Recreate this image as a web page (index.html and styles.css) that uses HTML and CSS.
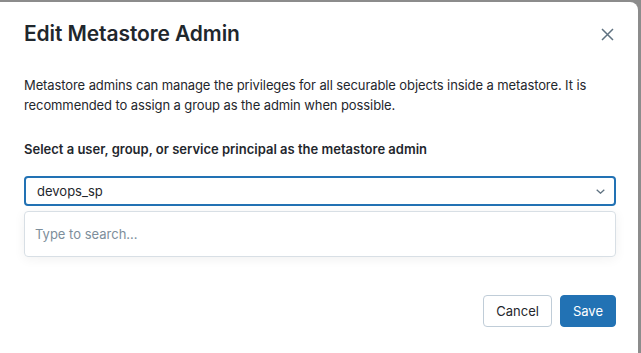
FILE: index.html
```html
<!DOCTYPE html>
<html lang="en">
<head>
  <meta charset="UTF-8" />
  <title>Edit Metastore Admin</title>
  <link rel="stylesheet" href="styles.css">
</head>
<body>
  <div class="modal">
    <div class="modal-header">
      <h2 class="modal-title">Edit Metastore Admin</h2>
      <button class="close" aria-label="Close">
        <svg width="13" height="13" viewBox="0 0 13 13"><path d="M1 1L12 12M12 1L1 12" stroke="#5f7281" stroke-width="1.5" fill="none"/></svg>
      </button>
    </div>

    <div class="modal-body">
      <p class="desc">Metastore admins can manage the privileges for all securable objects inside a metastore. It is recommended to assign a group as the admin when possible.</p>
      <div class="label">Select a user, group, or service principal as the metastore admin</div>

      <div class="select">
        <span class="select-value">devops_sp</span>
        <svg class="chevron" width="9" height="5" viewBox="0 0 9 5"><path d="M0.7 0.7L4.5 4.2L8.3 0.7" stroke="#5f7281" stroke-width="1.3" fill="none"/></svg>
      </div>
      <div class="dropdown">
        <div class="search">Type to search...</div>
      </div>
    </div>

    <div class="modal-footer">
      <button class="btn">Cancel</button>
      <button class="btn primary">Save</button>
    </div>
  </div>
</body>
</html>
```

FILE: styles.css
```css
body {
  margin: 0;
  background: #8c8c8c;
  font-family: Inter, 'Noto Sans', sans-serif;
  color: #1f272d;
  overflow: hidden;
}

.modal {
  background: #ffffff;
  width: 638px;
  height: 351px;
  margin-top: 2px;
  border-top-right-radius: 8px;
  box-sizing: border-box;
  padding: 0 22px 0 24px;
}

.modal-header {
  display: flex;
  align-items: center;
  justify-content: space-between;
  padding-top: 18px;
  height: 28px;
}

.modal-title {
  margin: 0;
  font-size: 21px;
  font-weight: 600;
  line-height: 28px;
  letter-spacing: -0.1px;
}

.close {
  background: none;
  border: none;
  padding: 0;
  margin-right: 2px;
  width: 13px;
  height: 13px;
  display: flex;
  cursor: pointer;
}

.modal-body {
  padding-top: 27px;
}

.desc {
  margin: 0;
  font-size: 13px;
  line-height: 20px;
  letter-spacing: -0.1px;
}

.label {
  margin-top: 24px;
  font-size: 13px;
  font-weight: 600;
  line-height: 20px;
}

.select {
  margin-top: 17px;
  height: 26px;
  border: 2px solid #2272b4;
  border-radius: 4px;
  display: flex;
  align-items: center;
  justify-content: space-between;
  padding: 0 9px 0 11px;
  font-size: 13px;
}

.dropdown {
  margin-top: 5px;
  height: 44px;
  border: 1px solid #d8dfe5;
  border-radius: 4px;
  box-shadow: 0 2px 12px rgba(0, 0, 0, 0.06);
  display: flex;
  align-items: center;
  padding: 0 10px;
}

.search {
  font-size: 13px;
  color: #7d8e9b;
}

.modal-footer {
  display: flex;
  justify-content: flex-end;
  gap: 8px;
  margin-top: 38px;
}

.btn {
  font-family: Inter, 'Noto Sans', sans-serif;
  font-size: 13px;
  height: 32px;
  padding: 0 12px;
  background: #ffffff;
  color: #1f272d;
  border: 1px solid #c0cdd8;
  border-radius: 4px;
}

.btn.primary {
  background: #2272b4;
  border-color: #2272b4;
  color: #ffffff;
}
```
